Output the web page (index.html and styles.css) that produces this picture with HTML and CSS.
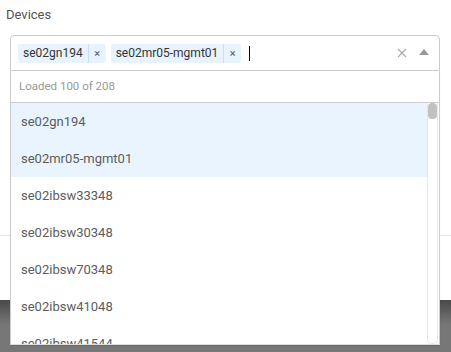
FILE: index.html
```html
<!DOCTYPE html>
<html lang="en">
<head>
<meta charset="UTF-8">
<meta name="viewport" content="width=device-width, initial-scale=1.0">
<title>Devices</title>
<link rel="stylesheet" href="styles.css">
</head>
<body>
<div class="field">
  <label class="field-label">Devices</label>
  <div class="select">
    <div class="control">
      <div class="values">
        <div class="tag"><span class="tag-label">se02gn194</span><span class="tag-remove">&times;</span></div>
        <div class="tag"><span class="tag-label">se02mr05-mgmt01</span><span class="tag-remove">&times;</span></div>
        <span class="cursor"></span>
      </div>
      <div class="indicators">
        <svg class="clear" width="10" height="10" viewBox="0 0 10 10"><path d="M1 1L9 9M9 1L1 9" stroke="#aaa" stroke-width="1.1" fill="none"/></svg>
        <svg class="arrow" width="10" height="6" viewBox="0 0 10 6"><path d="M0 6L5 0L10 6Z" fill="#999"/></svg>
      </div>
    </div>
    <div class="menu">
      <div class="menu-notice">Loaded 100 of 208</div>
      <div class="menu-body">
        <div class="menu-list">
          <div class="option selected">se02gn194</div>
          <div class="option selected">se02mr05-mgmt01</div>
          <div class="option">se02ibsw33348</div>
          <div class="option">se02ibsw30348</div>
          <div class="option">se02ibsw70348</div>
          <div class="option">se02ibsw41048</div>
          <div class="option">se02ibsw41544</div>
        </div>
        <div class="scrollbar"><div class="scroll-thumb"></div></div>
      </div>
    </div>
  </div>
</div>
<div class="divider"></div>
<div class="footer"></div>
</body>
</html>
```

FILE: styles.css
```css
body {
  font-family: Roboto, "Liberation Sans", sans-serif;
  margin: 0;
  padding: 0;
  background-color: #fff;
  color: #555;
}
.field-label {
  display: block;
  padding: 6px 0 0 6px;
  line-height: 17px;
  font-size: 13px;
  color: #555;
  margin-bottom: 12px;
}
.select {
  position: relative;
  margin-left: 10px;
  width: 430px;
}
.control {
  display: flex;
  align-items: center;
  height: 34px;
  border: 1px solid #ccc;
  border-radius: 4px 4px 0 0;
  background-color: #fff;
}
.values {
  flex: 1;
  display: flex;
  align-items: center;
  gap: 5px;
  padding-left: 7px;
}
.tag {
  display: flex;
  align-items: stretch;
  height: 19px;
  background-color: #e8f3ff;
  border-radius: 2px;
  font-size: 12px;
  color: #333;
}
.tag-label {
  padding: 0 5px;
  line-height: 19px;
  border-right: 1px solid #c2e0ff;
}
.tag-remove {
  width: 17px;
  text-align: center;
  line-height: 19px;
  font-size: 11px;
  color: #555;
}
.cursor {
  width: 1px;
  height: 15px;
  margin-left: 3px;
  background-color: #000;
}
.indicators {
  display: flex;
  align-items: center;
  gap: 12px;
  padding-right: 10px;
}
.arrow {
  margin-top: -2px;
}
.menu {
  position: absolute;
  top: 36px;
  left: 0;
  right: 0;
  border: 1px solid #ccc;
  border-top: none;
  border-bottom-color: #ddd;
  background-color: #fff;
  box-shadow: 0 1px 1px rgba(0, 0, 0, 0.08);
  z-index: 2;
}
.menu-notice {
  height: 31px;
  line-height: 31px;
  padding-left: 8px;
  font-size: 11.5px;
  color: #999;
  border-bottom: 1px solid #ccc;
}
.menu-body {
  display: flex;
  height: 241px;
}
.menu-list {
  flex: 1;
  overflow: hidden;
}
.scrollbar {
  width: 9px;
  margin-right: 1px;
  border: 1px solid #e8e8e8;
  border-top: none;
  border-radius: 0 0 5px 5px;
}
.scroll-thumb {
  height: 16px;
  background-color: #c1c1c1;
  border-radius: 4px;
}
.option {
  height: 37px;
  line-height: 37px;
  padding-left: 10px;
  font-size: 13px;
  color: #5c5c5c;
}
.option.selected {
  background-color: #e9f4ff;
}
.divider {
  margin-top: 164px;
  height: 1px;
  background-color: #e6e6e6;
}
.footer {
  margin-top: 64px;
  height: 52px;
  background: linear-gradient(#4a4a4a, #777 25px, #777);
}
```
